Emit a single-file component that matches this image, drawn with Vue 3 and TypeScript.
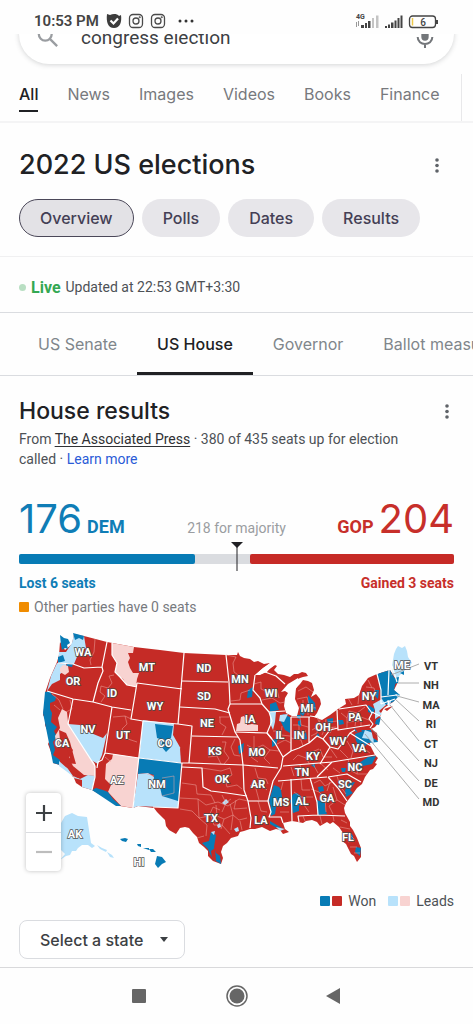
<script setup lang="ts">
import { ref } from 'vue'

const searchTabs = ['All', 'News', 'Images', 'Videos', 'Books', 'Finance']
const chips = ['Overview', 'Polls', 'Dates', 'Results']
const raceTabs = ['US Senate', 'US House', 'Governor', 'Ballot measures']

const query = ref('congress election')
const activeChip = ref('Overview')
const activeRace = ref('US House')
const selectedState = ref('')

const totalSeats = 435
const dem = 176
const gop = 204
const share = (seats: number) => ({ width: `${(seats / totalSeats) * 100}%` })

type Shape = { tone: string; d: string }

const mainland =
  'M74 634L84 636 107 642 134 647 160 650 184 653 226 655 237 655 238 652 240 656 244 658 250 659 254 662 258 661 264 664 270 663 262 669 255 675 261 674 267 672 270 668 275 665 277 666 274 670 278 674 284 675 290 677 294 674 298 674 302 672 306 673 308 676 303 677 300 678 296 680 293 682 288 686 290 690 285 698 284 706 286 713 292 716 297 716 299 708 295 699 296 688 300 684 303 680 308 681 312 683 314 690 311 697 316 694 320 699 321 704 317 713 314 717 322 720 330 715 338 709 346 704 345 699 354 698 359 695 362 686 368 678 377 674 390 670 398 682 394 690 399 695 393 702 384 708 381 713 379 722 375 727 371 729 376 738 370 733 368 738 371 747 375 755 378 758 375 763 377 764 373 769 370 770 365 777 362 784 357 788 352 795 346 803 344 808 345 813 350 822 350 826 353 830 357 838 361 848 361 857 357 862 354 856 351 854 349 850 346 844 342 841 343 833 339 827 333 822 330 824 327 822 320 826 317 822 312 820 306 821 303 823 298 822 292 821 283 823 285 829 289 832 283 834 280 830 276 829 270 831 262 827 255 829 250 829 244 831 240 832 238 836 231 838 227 843 223 846 221 852 223 858 221 864 213 861 208 856 208 851 204 847 199 843 197 837 193 833 189 828 185 827 180 828 176 834 169 830 166 826 165 820 163 818 157 812 154 808 138 806 133 808 120 806 92 790 82 787 80 779 73 777 67 768 60 765 53 763 53 757 51 752 48 744 50 740 48 732 45 725 45 718 43 715 45 702 45 693 50 678 57 662 59 655 60 642 65 650 72 644Z'

const fills: Shape[] = [
  // Pacific coast
  { tone: 'dl', d: 'M74 634L84 636 86 648 79 652 74 664 58 663 59 652 66 652 72 643Z' },
  { tone: 'dw', d: 'M60 635L64 638 68 639 70 643 67 645 68 649 65 648 62 650 61 645ZM73 633L84 636 83 640 79 638 75 640ZM58 657L63 655 65 661 58 663ZM66 663L73 664 72 667 67 666Z' },
  { tone: 'dl', d: 'M57 663L66 664 67 669 60 674 60 680 52 684 47 691 51 676Z' },
  { tone: 'gl', d: 'M60 668L63 665 68 666 69 672 65 675 60 672Z' },
  { tone: 'dw', d: 'M45 692L50 691 52 695 56 697 55 701 50 703 50 709 52 713 51 722 57 727 54 731 57 737 53 742 55 750 53 755 60 760 60 765 53 763 48 738 43 713Z' },
  { tone: 'gl', d: 'M62 709L67 712 68 722 95 764 95 776 84 775 73 766 69 758 73 750 64 739 57 748 55 736 60 728 58 718Z' },
  { tone: 'gw', d: 'M59 730L66 733 70 742 74 757 76 764 66 763 70 757 66 747 60 740Z' },
  { tone: 'dl', d: 'M59 761L68 769 73 776 80 779 88 775 95 776 92 790 82 787 75 778 66 771 59 766Z' },
  { tone: 'gw', d: 'M74 778L82 780 82 787 76 783Z' },
  // Mountain states
  { tone: 'dl', d: 'M68 724L80 725 86 731 103 738 107 733 102 755 98 764 91 760Z' },
  { tone: 'gl', d: 'M112 643L134 647 133 653 128 653 130 658 128 662 130 668 133 673 139 673 137 679 136 687 127 685 123 679 120 677 115 672 117 663 112 655Z' },
  { tone: 'gl', d: 'M113 754L139 758 133 808 121 806 108 792 111 785 105 779 106 764 112 759Z' },
  { tone: 'dw', d: 'M92 790L96 788 103 790 108 792 113 799 121 806 116 806Z' },
  { tone: 'dl', d: 'M143 720L174 724 173 735 177 742 181 749 181 763 139 758Z' },
  { tone: 'dw', d: 'M155 724L173 726 171 738 166 741 171 747 166 752 161 746 163 740 157 738Z' },
  { tone: 'dw', d: 'M139 758L181 763 178 808 162 796 159 787 153 783 154 775 147 773 138 774Z' },
  { tone: 'dl', d: 'M138 774L148 773 154 777 153 784 160 787 162 796 178 801 178 808 138 806 133 808Z' },
  { tone: 'gw', d: 'M180 748L191 751 189 763 181 763Z' },
  // Midwest
  { tone: 'gl', d: 'M236 731L237 724 240 723 241 717 244 716 247 721 247 725 252 724 258 725 258 731Z' },
  { tone: 'dw', d: 'M248 690L253 687 252 697 247 698ZM270 704L276 702 279 710 270 712ZM238 746L244 743 243 752 239 754ZM272 740L278 738 276 745 272 747ZM283 714L290 717 290 733 285 730 280 720ZM303 735L306 732 307 739 303 740ZM308 695L315 703 316 711 308 706ZM300 709L305 713 303 716 300 714ZM297 715L301 715 300 719 297 718ZM318 733L320 737 316 736ZM327 719L333 718 333 723 328 724ZM298 721L301 720 301 727 298 725Z' },
  { tone: 'dl', d: 'M270 712L276 712 275 722 273 730 270 723ZM280 715L288 714 284 722 279 721Z' },
  // South
  { tone: 'dw', d: 'M274 785L279 787 281 790 282 797 277 802 276 808 275 814 271 816 271 808 269 800ZM293 794L297 793 301 796 302 802 299 806 299 811 293 813 290 801ZM318 787L323 786 324 791 319 792ZM317 800L325 803 325 809 327 814 318 815ZM202 843L209 841 211 832 216 835 214 847 216 853 220 856 221 864 214 860 211 856 208 849ZM270 821L282 828 277 828 270 824ZM351 833L353 836 353 841 349 839ZM356 847L361 848 360 856 355 852ZM345 790L349 783 355 782 350 790 353 793 346 797ZM359 763L368 757 376 756 372 764 363 766 359 769ZM341 768L346 768 345 772 342 772ZM311 765L315 764 315 768ZM355 734L363 731 367 738 376 738 378 742 368 743 362 750 356 741Z' },
  { tone: 'gw', d: 'M211 851L215 848 216 861 212 859Z' },
  { tone: 'dl', d: 'M222 803L226 799 229 802 225 805ZM217 825L220 823 221 827 218 828ZM211 832L215 831 214 835ZM234 829L238 827 239 831 236 832ZM276 827L285 829 280 831Z' },
  // Northeast
  { tone: 'dw', d: 'M377 674L390 670 396 681 394 690 400 695 393 702 383 706 381 697 380 687ZM354 727L358 733 355 731ZM368 705L375 709 373 714 368 712ZM376 720L381 717 379 725 375 724ZM338 720L343 720 344 724 339 725ZM375 690L379 690 378 699 374 695ZM361 730L371 730 375 739 368 737Z' },
  { tone: 'dl', d: 'M373 704L382 699 386 705 379 711 382 714 375 719 375 710ZM365 730L373 733 374 745 369 739 362 738ZM388 701L391 701 390 706 387 705ZM395 694L400 695 398 698Z' },
  { tone: 'dl', d: 'M392 666L393 660 394 654 396 649 398 646 402 648 405 646 407 651 408 657 412 663 408 667 404 671 399 676 397 682 393 674Z' },
  { tone: 'gw', d: 'M371 729L377 733 378 741 373 738ZM384 709L393 706 387 711ZM357 700L362 697 363 702 358 703Z' },
  { tone: 'dw', d: 'M394 678L399 677 398 683 394 684ZM400 673L404 671 404 675Z' },
  // Alaska and Hawaii
  { tone: 'dl', d: 'M61 823L65 816 72 813 78 816 87 817 91 843 95 846 92 848 88 845 82 845 78 848 76 851 72 851 70 855 66 856 60 860 65 854 61 850ZM97 845L102 848 107 850 106 852 100 849ZM107 852L112 855 114 858 110 857Z' },
  { tone: 'dw', d: 'M120 839L125 838 128 839 126 842 122 841ZM137 844L141 844 141 847 138 846ZM143 848L149 848 149 850ZM149 849L153 849 156 852 151 852ZM157 856L162 857 166 862 162 864 158 868 155 864 156 860Z' },
]

const lakes = [
  'M288 684L298 678 299 684 295 690 294 699 297 708 295 715 290 714 286 711 286 701 288 693 285 691 281 692Z',
  'M255 675L263 668 272 662 276 664 266 672 260 675Z',
]

const borders = [
  'M107 642L102 667 103 671 98 683 93 702M58 663L73 664 84 668 102 667M47 691L73 699 93 702 112 707 131 710',
  'M73 699L68 724 95 766 95 777 92 790M112 707L105 753M105 753L139 758 181 763 190 763 243 765M105 753L102 760 98 762 97 768',
  'M112 643L112 655 117 663 115 672 120 677 127 685 137 687M137 683L131 719 143 721 178 724 192 726 189 763',
  'M137 683L182 689M184 653L178 724M143 721L133 808M182 763L178 808 153 807',
  'M182 681L228 682M226 655L229 682 230 704 228 709 231 719 235 732 240 740 243 765 244 790 248 801 251 818 250 828',
  'M180 707L215 709 230 713M192 736L238 737M230 704L262 704M235 732L267 733 272 739',
  'M255 675L253 690 260 698 262 704 269 712 272 721 267 733 275 743 283 757 281 768 273 781 268 801 271 812 269 817 281 817 283 823',
  'M269 712L285 711M265 672L276 676 285 684M182 767L202 768 203 787 211 791 227 793 247 796',
  'M243 765L278 768M248 801L269 801M278 781L327 777M283 766L332 762 375 755',
  'M283 757L291 751 299 748 309 743 317 736 323 739 330 730 338 728M291 717L291 751M291 717L310 717M309 717L309 743',
  'M337 710L338 730 370 725M339 709L366 705 372 713 369 719 373 724 370 728M372 712L380 716',
  'M323 739L330 747 338 749 345 740 350 733 355 730M330 747L320 764M332 762L317 777M291 779L292 821M310 778L317 802 318 815 298 816 299 822M318 815L345 816',
  'M328 777L338 788 347 801M328 777L347 774 361 782M377 674L381 690 381 704M381 697L397 695M389 670L388 695M381 704L395 699M350 733L358 738 366 743 371 746',
  'M376 674L392 666 397 682M388 700L389 706M317 717L310 716',
]

const districts = [
  'M95 639L94 652 90 660 91 665M112 683L108 688 101 686 100 692 105 696 101 702M112 683L109 676 114 675M70 700L72 709 66 712M113 717L125 716 127 724 122 729 128 739 137 742M125 716L131 719',
  'M226 655L236 657 233 663 234 672 241 677M231 701L240 700 241 693 250 690M254 684L261 682 261 689 268 692 277 690 279 698M262 700L272 698 280 703 285 702M220 717L220 723 226 727 222 735M219 717L229 717',
  'M222 742L226 742 224 751 229 758 224 764M235 739L231 747 234 755 240 756M254 736L254 749 263 745 270 750 264 758 270 764M247 745L254 749 251 757 258 762M270 750L279 751',
  'M202 768L221 771 230 768 232 775 225 779 227 787 237 785 242 789M255 768L258 778 266 779 268 784M250 786L259 783 267 790M256 789L259 800M258 801L261 811 267 812',
  'M182 783L196 785 197 794 211 795M180 798L198 799 206 805 218 802 228 806 239 799 248 801M180 809L192 811 199 818 209 816 213 807 220 810M198 799L199 818 207 825 206 836M216 805L217 816 224 819 221 829M230 804L233 815 239 820 247 818M224 819L233 815M233 815L231 830',
  'M204 836L197 838M222 795L226 803 222 812M236 800L234 809 247 808M211 795L215 803M225 803L231 799M211 816L214 825 222 825 230 834M240 821L242 830',
  'M277 744L285 740 291 743M282 726L281 735 290 736M273 731L280 731M293 725L299 725 299 733 306 731M291 738L301 740 303 746M300 718L301 725 308 727M312 730L319 726 320 719M311 736L317 733 318 727M322 735L325 728 336 727M326 719L325 728M330 733L333 727M317 717L319 722M328 722L337 721',
  'M341 713L347 718 349 711 357 713 365 707M347 718L347 728M357 713L355 726M347 722L359 721 361 717 369 720M361 717L361 726M348 698L352 705M359 695L358 704M366 687L374 688 376 695M367 700L372 694M368 680L372 688',
  'M293 760L298 755 306 758 312 752 319 749M306 758L309 763M320 749L323 757 332 757M291 767L294 776M300 765L303 777M313 764L318 773M320 763L328 770M330 748L337 758M340 750L348 758M347 741L353 751 351 758M333 739L339 744M359 751L363 748 370 753',
  'M283 782L281 790M283 801L290 803M280 812L289 812M301 779L302 790 310 790M294 792L301 797 313 797M302 802L309 812M314 783L320 780 325 786 332 782M311 789L319 792 325 798 333 797M333 787L337 800 329 806 333 814M325 797L326 812M337 800L345 805M330 782L327 791',
  'M337 776L340 786 349 779M333 768L340 773M348 759L350 770 357 774M359 762L357 774 367 774M340 786L346 794M303 816L305 821M320 816L322 824M333 816L334 821M341 820L347 823M340 827L350 829M343 835L350 835 355 840M348 842L355 840M350 847L357 847M354 853L360 853',
  'M298 691L306 687 313 692M297 699L307 697 309 704M298 707L309 707 316 708M303 700L303 714M308 706L308 715M52 694L59 700 63 709M54 705L60 710M105 757L111 762M208 757L217 756 221 764M154 776L147 774M162 778L174 776 174 793 162 796',
]

const leaders = [
  'M419 664L391 675', 'M419 683L398 683', 'M419 702L397 696', 'M419 721L395 699',
  'M419 741L390 705', 'M419 761L380 718', 'M419 781L371 728', 'M419 799L365 734',
]

type Label = [string, number, number]
const stateLabels: Label[] = [
  ['WA', 83, 656], ['OR', 73, 685], ['ID', 112, 697], ['MT', 147, 671], ['ND', 204, 672],
  ['SD', 204, 700], ['NE', 207, 727], ['KS', 215, 755], ['OK', 222, 783], ['TX', 211, 822],
  ['WY', 155, 710], ['UT', 123, 739], ['NV', 88, 733], ['CA', 62, 747], ['AZ', 117, 784],
  ['NM', 157, 788], ['CO', 165, 747], ['MN', 240, 683], ['WI', 271, 697], ['IA', 250, 723],
  ['IL', 280, 739], ['IN', 299, 739], ['MO', 257, 756], ['AR', 258, 788], ['LA', 261, 824],
  ['MS', 281, 806], ['AL', 302, 805], ['GA', 327, 802], ['FL', 348, 841], ['SC', 345, 788],
  ['NC', 355, 771], ['VA', 359, 752], ['WV', 338, 745], ['KY', 313, 760], ['TN', 302, 776],
  ['OH', 323, 731], ['MI', 307, 712], ['PA', 355, 721], ['NY', 369, 700],
]
const outlineLabels: Label[] = [['ME', 402, 669], ['AK', 75, 838], ['HI', 139, 866]]
const sideLabels: Label[] = [
  ['VT', 431, 670], ['NH', 431, 689], ['MA', 431, 709], ['RI', 431, 728],
  ['CT', 431, 748], ['NJ', 431, 767], ['DE', 431, 787], ['MD', 431, 806],
]
</script>

<template>
  <div class="screen">
    <header class="status">
      <span class="clock">10:53 PM</span>
      <svg class="status-icon" viewBox="0 0 16 16" aria-hidden="true">
        <path d="M1 1L4 2C7 .5 11 .5 13 3L15 2C16 9 14 15 8 15S0 9 1 1Z" fill="#3c3c3c" />
        <path d="M4.500 7.500L7.500 10.500 12 5.500" fill="none" stroke="#fff" stroke-width="2.200" />
      </svg>
      <svg v-for="n in 2" :key="n" class="status-icon" viewBox="0 0 16 16" fill="none" stroke="#4a4a4a" stroke-width="1.300" aria-hidden="true">
        <rect x="1.500" y="1.500" width="13" height="13" rx="3.500" />
        <circle cx="8" cy="8" r="3" />
        <circle cx="11.700" cy="4.300" r=".4" />
      </svg>
      <svg class="more" viewBox="0 0 18 16" fill="#333" aria-hidden="true">
        <circle cx="3" cy="8" r="1.500" /><circle cx="9" cy="8" r="1.500" /><circle cx="15" cy="8" r="1.500" />
      </svg>
      <svg class="signals" viewBox="0 0 86 18" aria-hidden="true">
        <text x="1" y="7" class="net">4G</text>
        <path d="M1.500 10V15M3.500 9V14" stroke="#999" />
        <g fill="#444">
          <path d="M6 13H9V16H6ZM10 11H12V16H10ZM13 9H15.500V16H13Z" />
          <path d="M30 14H32V16H30ZM33 12.500H35V16H33ZM36 10.500H38.500V16H36ZM39.500 8.500H41.500V16H39.500ZM42.500 6H44.500V16H42.500ZM45.500 3.500H47.500V16H45.500Z" />
        </g>
        <path d="M17 6H19V16H17ZM21 3.500H23.500V16H21Z" fill="#c4c4c4" />
        <rect x="54.500" y="4" width="26" height="11.500" rx="3" fill="none" stroke="#444" stroke-width="1.300" />
        <path d="M82 8V12" stroke="#444" stroke-width="2" />
        <path d="M57.500 6V13.500" stroke="#edc849" stroke-width="1.500" />
        <text x="68" y="13.500" text-anchor="middle" class="battery">6</text>
      </svg>
    </header>

    <div class="search-clip">
      <form class="search" @submit.prevent>
        <svg class="lens" viewBox="0 0 24 24" fill="none" stroke="#9a9da1" stroke-width="2.500" aria-hidden="true">
          <circle cx="9" cy="9" r="7" /><path d="M14 14L22 22" />
        </svg>
        <input v-model="query" type="text" aria-label="Search" />
        <button type="button" class="icon-button" aria-label="Search by voice">
          <svg class="mic" viewBox="0 0 24 24" aria-hidden="true">
            <rect x="8" y="2" width="8" height="13" rx="4" fill="#73767a" />
            <path d="M4 11C4 21 20 21 20 11M12 18V23" fill="none" stroke="#73767a" stroke-width="2.200" />
          </svg>
        </button>
      </form>
    </div>

    <nav class="search-tabs" aria-label="Search categories">
      <a v-for="(tab, i) in searchTabs" :key="tab" href="#" :class="{ current: i === 0 }">{{ tab }}</a>
      <i class="nav-rule"></i>
    </nav>

    <main>
      <section class="intro">
        <div class="heading-row">
          <h1>2022 US elections</h1>
          <button type="button" class="icon-button" aria-label="More options">
            <svg class="dots" viewBox="0 0 6 18" aria-hidden="true"><circle cx="3" cy="4" r="1.800" /><circle cx="3" cy="9.500" r="1.800" /><circle cx="3" cy="15" r="1.800" /></svg>
          </button>
        </div>
        <div class="chips">
          <button v-for="chip in chips" :key="chip" type="button" :class="['chip', { active: chip === activeChip }]" @click="activeChip = chip">{{ chip }}</button>
        </div>
      </section>

      <p class="live"><i class="pulse"></i><strong>Live</strong><span>Updated at 22:53 GMT+3:30</span></p>

      <div class="race-tabs">
        <button v-for="race in raceTabs" :key="race" type="button" :class="{ current: race === activeRace }" @click="activeRace = race">{{ race }}</button>
      </div>

      <section class="results">
        <div class="heading-row small">
          <h2>House results</h2>
          <button type="button" class="icon-button" aria-label="More options">
            <svg class="dots" viewBox="0 0 6 18" aria-hidden="true"><circle cx="3" cy="4" r="1.800" /><circle cx="3" cy="9.500" r="1.800" /><circle cx="3" cy="15" r="1.800" /></svg>
          </button>
        </div>
        <p class="source">From <a href="#" class="press">The Associated Press</a> · 380 of 435 seats up for election called · <a href="#" class="learn">Learn more</a></p>

        <div class="score">
          <p class="side dem"><span class="count">{{ dem }}</span><b>DEM</b></p>
          <p class="majority">218 for majority</p>
          <p class="side gop"><b>GOP</b><span class="count">{{ gop }}</span></p>
        </div>
        <div class="bar">
          <span class="bar-dem" :style="share(dem)"></span>
          <span class="bar-gop" :style="share(gop)"></span>
          <svg class="marker" viewBox="0 0 12 30" aria-hidden="true"><path d="M0 0H12L6 6Z" /><path d="M6 0V29" stroke="#202124" /></svg>
        </div>
        <div class="changes"><b class="dem">Lost 6 seats</b><b class="gop">Gained 3 seats</b></div>
        <p class="others"><i class="swatch other"></i>Other parties have 0 seats</p>
      </section>

      <div class="map">
        <svg viewBox="0 620 473 265" role="img" aria-label="House results by district">
          <path :d="mainland" class="gw" />
          <path v-for="(s, i) in fills" :key="'f' + i" :d="s.d" :class="s.tone" />
          <path v-for="d in districts" :key="d" :d="d" class="district" />
          <path v-for="d in borders" :key="d" :d="d" class="border" />
          <path v-for="d in lakes" :key="d" :d="d" fill="#fff" />
          <path v-for="d in leaders" :key="d" :d="d" class="leader" />
          <text v-for="[t, x, y] in stateLabels" :key="t" :x="x" :y="y" class="state">{{ t }}</text>
          <text v-for="[t, x, y] in outlineLabels" :key="t" :x="x" :y="y" class="state outlined">{{ t }}</text>
          <text v-for="[t, x, y] in sideLabels" :key="t" :x="x" :y="y" class="side-label">{{ t }}</text>
        </svg>
        <div class="zoom">
          <button type="button" aria-label="Zoom in"><svg viewBox="0 0 18 18"><path d="M9 1V17M1 9H17" /></svg></button>
          <button type="button" aria-label="Zoom out" disabled><svg viewBox="0 0 18 18"><path d="M1 9H17" /></svg></button>
        </div>
      </div>

      <div class="legend">
        <span><i class="swatch won-dem"></i><i class="swatch won-gop"></i>Won</span>
        <span><i class="swatch lead-dem"></i><i class="swatch lead-gop"></i>Leads</span>
      </div>

      <div class="picker">
        <select v-model="selectedState" aria-label="Select a state">
          <option value="">Select a state</option>
          <option v-for="s in stateLabels" :key="s[0]" :value="s[0]">{{ s[0] }}</option>
        </select>
        <svg class="caret" viewBox="0 0 8 5" aria-hidden="true"><path d="M0 0H8L4 5Z" /></svg>
      </div>
    </main>

    <footer class="system-nav">
      <button type="button" class="icon-button" aria-label="Recent apps"><svg viewBox="0 0 24 24"><rect x="5" y="5" width="14" height="14" rx="1" /></svg></button>
      <button type="button" class="icon-button" aria-label="Home"><svg viewBox="0 0 24 24"><circle cx="12" cy="12" r="7.500" /><circle cx="12" cy="12" r="10" fill="none" stroke="#666" stroke-width="1.500" /></svg></button>
      <button type="button" class="icon-button" aria-label="Back"><svg viewBox="0 0 24 24"><path d="M17 4V20L3 12Z" /></svg></button>
    </footer>
  </div>
</template>

<style>
body {
  margin: 0;
  background: #fefefe;
}
</style>

<style scoped>
.screen {
  font-family: Roboto, "Liberation Sans", sans-serif;
  font-size: 14px;
  color: #4d5156;
  overflow: hidden;
}
.screen * { box-sizing: border-box; }
h1, h2, p { margin: 0; }
button, select, input { font: inherit; color: inherit; border: 0; background: none; padding: 0; }
button { cursor: pointer; }
a { color: inherit; text-decoration: none; }
svg { display: block; }

.status {
  display: flex;
  align-items: center;
  gap: 6px;
  height: 34px;
  padding: 8px 32px 0 34px;
}
.clock { font-size: 15px; font-weight: 600; color: #444; margin-right: 1px; }
.status-icon { width: 16px; height: 16px; }
.more { width: 18px; height: 16px; margin-left: 5px; }
.signals { width: 86px; height: 18px; margin-left: auto; }
.net { font-size: 7px; font-weight: 700; fill: #444; }
.battery { font-size: 10px; font-weight: 500; fill: #444; }

.search-clip { height: 40px; padding: 0 19px; overflow: hidden; }
.search {
  display: flex;
  align-items: center;
  height: 60px;
  margin-top: -30px;
  padding: 0 18px;
  border-radius: 30px;
  background: #fff;
  box-shadow: 0 1px 5px rgba(60, 64, 67, 0.22);
}
.lens { width: 22px; height: 22px; margin-right: 22px; margin-top: 5px; }
.search input { flex: 1; min-width: 0; font-size: 19px; color: #3c4043; outline: none; margin-top: 6px; }
.mic { width: 22px; height: 22px; margin-top: 7px; }
.icon-button { display: flex; align-items: center; justify-content: center; }

.search-tabs {
  position: relative;
  display: flex;
  gap: 29px;
  height: 49px;
  padding: 0 19px;
  border-bottom: 2px solid #f4f4f5;
  font-family: Inter, Roboto, sans-serif;
  font-size: 16px;
  line-height: 41px;
  color: #77797d;
  white-space: nowrap;
}
.search-tabs a { height: 38px; }
.search-tabs .current { color: #202124; font-weight: 500; border-bottom: 2px solid #202124; }
.nav-rule { position: absolute; right: 11px; top: 0; bottom: 0; border-left: 1px solid #e8e8ea; }

.intro { padding: 22px 19px 19px; border-bottom: 1px solid #f0f0f1; }
.heading-row { display: flex; align-items: center; justify-content: space-between; padding-right: 14px; }
.heading-row.small { padding-right: 4px; }
h1, h2 { font-family: Inter, Roboto, sans-serif; font-weight: 500; color: #202124; }
h1 { font-size: 27px; line-height: 40px; }
h2 { font-size: 23px; line-height: 30px; }
.dots { width: 6px; height: 18px; fill: #5f6368; }
.chips { display: flex; gap: 8px; margin-top: 14px; }
.chip {
  height: 38px;
  padding: 0 20px;
  border: 1px solid transparent;
  border-radius: 19px;
  background: #e7e6ea;
  color: #443f55;
  font-family: Inter, Roboto, sans-serif;
  font-size: 16px;
  font-weight: 500;
}
.chip.active { border-color: #4b4859; background: #e3e2e6; }

.live { display: flex; align-items: center; height: 55px; padding: 5px 19px 0; gap: 5px; }
.pulse { width: 7px; height: 7px; border-radius: 50%; background: #b9dfc3; }
.live strong { color: #34a853; font-size: 16px; font-weight: 700; }

.race-tabs {
  display: flex;
  height: 64px;
  padding-left: 18px;
  border-top: 1px solid #dadce0;
  border-bottom: 1px solid #dadce0;
  font-family: Inter, Roboto, sans-serif;
  font-size: 16px;
  color: #80868b;
  white-space: nowrap;
  overflow: hidden;
}
.race-tabs button { flex: none; padding: 2px 20px 0; border-bottom: 3px solid transparent; }
.race-tabs .current { color: #202124; font-weight: 500; border-bottom-color: #202124; }

.results { padding: 20px 19px 0; }
.source { font-size: 14px; line-height: 20px; margin-top: 3px; padding-right: 24px; }
.press { color: #303134; text-decoration: underline; text-underline-offset: 2px; }
.learn { color: #2a5bd7; }
.score { display: grid; grid-template-columns: 1fr auto 1fr; align-items: baseline; margin-top: 24px; line-height: 52px; }
.side { display: flex; align-items: baseline; gap: 5px; font-size: 18px; }
.side.gop { justify-content: flex-end; }
.count { font-family: Inter, Roboto, sans-serif; font-size: 40px; }
.dem { color: #0f7db6; }
.gop { color: #c72f2a; }
.majority { font-size: 14px; color: #9a9da1; }
.bar {
  position: relative;
  display: flex;
  justify-content: space-between;
  height: 10px;
  border-radius: 2px;
  background: #dadce0;
}
.bar span { border-radius: 2px; }
.bar-dem { background: #077bb5; }
.bar-gop { background: #c62a26; }
.marker { position: absolute; left: 50%; top: -12px; width: 12px; height: 30px; margin-left: -6px; fill: #202124; }
.changes { display: flex; justify-content: space-between; margin-top: 9px; line-height: 20px; }
.others { display: flex; align-items: center; line-height: 20px; margin-top: 4px; color: #777a7e; }
.swatch { display: inline-block; width: 10px; height: 10px; border-radius: 1px; }
.other { background: #f08c00; margin-right: 5px; }

.map { position: relative; margin-top: 3px; }
.map > svg { width: 100%; height: auto; }
.gw { fill: #c52b26; }
.dw { fill: #087bb5; }
.dl { fill: #b8e2fb; }
.gl { fill: #f8d3d1; }
.border { fill: none; stroke: #fff; stroke-width: 1.2; stroke-linejoin: round; }
.district { fill: none; stroke: #efaaa5; stroke-width: 0.5; }
.leader { fill: none; stroke: #999; stroke-width: 0.8; }
.state { font-size: 11px; font-weight: 700; text-anchor: middle; fill: #fff; stroke: #4a4a4a; stroke-width: 1.4px; paint-order: stroke; }
.outlined { stroke: #555; }
.side-label { font-size: 11px; font-weight: 700; text-anchor: middle; fill: #333; }
.zoom {
  position: absolute;
  left: 26px;
  bottom: 14px;
  width: 35px;
  border-radius: 4px;
  background: #fff;
  box-shadow: 0 0 4px rgba(0, 0, 0, 0.25);
}
.zoom button { display: grid; place-items: center; width: 100%; height: 39px; }
.zoom button + button { border-top: 1px solid #dadce0; }
.zoom svg { width: 18px; height: 18px; fill: none; stroke: #3c4043; stroke-width: 2.2; }
.zoom button:disabled svg { stroke: #bdbdbd; }

.legend { display: flex; justify-content: flex-end; gap: 12px; padding: 6px 19px 0; line-height: 20px; }
.legend span { display: flex; align-items: center; gap: 2px; }
.legend .swatch:nth-child(2) { margin-right: 4px; }
.won-dem { background: #087bb5; }
.won-gop { background: #c52b26; }
.lead-dem { background: #b8e2fb; }
.lead-gop { background: #f8d3d1; }

.picker { position: relative; width: max-content; margin: 9px 19px 8px; }
.picker select {
  appearance: none;
  height: 39px;
  padding: 0 40px 0 20px;
  border: 1px solid #dadce0;
  border-radius: 8px;
  background: #fff;
  color: #3c4043;
  font-family: Inter, Roboto, sans-serif;
  font-size: 16px;
  font-weight: 500;
}
.caret { position: absolute; right: 17px; top: 17px; width: 8px; height: 5px; fill: #3c4043; pointer-events: none; }

.system-nav {
  display: flex;
  justify-content: center;
  gap: 74px;
  height: 57px;
  padding-top: 16px;
  border-top: 1px solid #d9d9db;
}
.system-nav svg { width: 24px; height: 24px; fill: #666; }
.system-nav .icon-button { height: 24px; }
</style>
